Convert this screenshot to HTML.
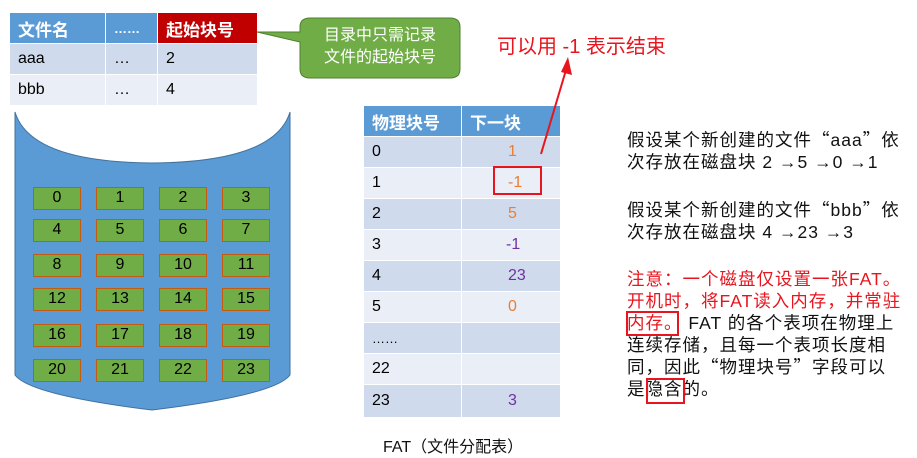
<!DOCTYPE html><html><head><meta charset="utf-8"><style>
body{margin:0;width:917px;height:458px;background:#fff;position:relative;overflow:hidden;font-family:"Liberation Sans","Noto Sans CJK SC",sans-serif}
.a{position:absolute}
.c{position:absolute;display:flex;align-items:center;box-sizing:border-box;padding-left:8px;font-size:16px;color:#000}
.h{background:#5b9bd5;color:#fff;font-weight:bold;font-size:17px}
.r1{background:#cfdbed}.r2{background:#e9eef7}
.blk{position:absolute;width:48px;height:23px;background:#70ad47;border:1.5px solid #c55a11;box-sizing:border-box;text-align:center;line-height:20px;font-size:16px;color:#000}
.t{position:absolute;left:627px;font-size:17.5px;letter-spacing:1px;line-height:22px;color:#111;white-space:nowrap;font-family:"Liberation Sans","Noto Sans CJK SC",sans-serif}
.q{font-family:"Noto Sans CJK SC",sans-serif}
</style></head><body>
<div class="c h" style="left:10px;top:13px;width:95px;height:30px">文件名</div>
<div class="c h" style="left:106px;top:13px;width:51px;height:30px;font-size:13px">……</div>
<div class="c h" style="left:158px;top:13px;width:99px;height:30px;background:#c00000">起始块号</div>
<div class="c r1" style="left:10px;top:44px;width:95px;height:30px">aaa</div>
<div class="c r1" style="left:106px;top:44px;width:51px;height:30px">…</div>
<div class="c r1" style="left:158px;top:44px;width:99px;height:30px">2</div>
<div class="c r2" style="left:10px;top:75px;width:95px;height:30px">bbb</div>
<div class="c r2" style="left:106px;top:75px;width:51px;height:30px">…</div>
<div class="c r2" style="left:158px;top:75px;width:99px;height:30px">4</div>
<svg class="a" style="left:0;top:0" width="917" height="458">
<path d="M300 27 Q300 18 310 18 L450 18 Q460 18 460 27 L460 69 Q460 78 450 78 L310 78 Q300 78 300 69 L300 42 L257 32 L300 32 Z" fill="#70ad47" stroke="#507e32" stroke-width="1"/>
<path d="M15 112 L15 375 Q30 395 152 410 Q275 395 290 375 L290 112 Q275 162 152 163 Q30 162 15 112 Z" fill="#5b9bd5" stroke="#41719c" stroke-width="1"/>
</svg>
<div class="a" style="left:300px;top:25px;width:160px;text-align:center;color:#fff;font-size:16px;line-height:22px">目录中只需记录<br>文件的起始块号</div>
<div class="a" style="left:497px;top:30px;color:#e8141e;font-size:20px">可以用 -1 表示结束</div>
<div class="blk" style="left:33px;top:187px">0</div><div class="blk" style="left:96px;top:187px">1</div><div class="blk" style="left:159px;top:187px">2</div><div class="blk" style="left:222px;top:187px">3</div>
<div class="blk" style="left:33px;top:219px">4</div><div class="blk" style="left:96px;top:219px">5</div><div class="blk" style="left:159px;top:219px">6</div><div class="blk" style="left:222px;top:219px">7</div>
<div class="blk" style="left:33px;top:254px">8</div><div class="blk" style="left:96px;top:254px">9</div><div class="blk" style="left:159px;top:254px">10</div><div class="blk" style="left:222px;top:254px">11</div>
<div class="blk" style="left:33px;top:288px">12</div><div class="blk" style="left:96px;top:288px">13</div><div class="blk" style="left:159px;top:288px">14</div><div class="blk" style="left:222px;top:288px">15</div>
<div class="blk" style="left:33px;top:324px">16</div><div class="blk" style="left:96px;top:324px">17</div><div class="blk" style="left:159px;top:324px">18</div><div class="blk" style="left:222px;top:324px">19</div>
<div class="blk" style="left:33px;top:359px">20</div><div class="blk" style="left:96px;top:359px">21</div><div class="blk" style="left:159px;top:359px">22</div><div class="blk" style="left:222px;top:359px">23</div>
<div class="c h" style="left:364px;top:106px;width:97px;height:30px">物理块号</div>
<div class="c h" style="left:462px;top:106px;width:98px;height:30px">下一块</div>
<div class="c r1" style="left:364px;top:137px;width:97px;height:30px">0</div><div class="c r1" style="left:462px;top:137px;width:98px;height:30px;padding-left:46px;color:#ed7d31">1</div>
<div class="c r2" style="left:364px;top:168px;width:97px;height:30px">1</div><div class="c r2" style="left:462px;top:168px;width:98px;height:30px;padding-left:46px;color:#ed7d31">-1</div>
<div class="c r1" style="left:364px;top:199px;width:97px;height:30px">2</div><div class="c r1" style="left:462px;top:199px;width:98px;height:30px;padding-left:46px;color:#ed7d31">5</div>
<div class="c r2" style="left:364px;top:230px;width:97px;height:30px">3</div><div class="c r2" style="left:462px;top:230px;width:98px;height:30px;padding-left:44px;color:#7030a0">-1</div>
<div class="c r1" style="left:364px;top:261px;width:97px;height:30px">4</div><div class="c r1" style="left:462px;top:261px;width:98px;height:30px;padding-left:46px;color:#7030a0">23</div>
<div class="c r2" style="left:364px;top:292px;width:97px;height:30px">5</div><div class="c r2" style="left:462px;top:292px;width:98px;height:30px;padding-left:46px;color:#ed7d31">0</div>
<div class="c r1" style="left:364px;top:323px;width:97px;height:30px;font-size:13px">……</div><div class="c r1" style="left:462px;top:323px;width:98px;height:30px"></div>
<div class="c r2" style="left:364px;top:354px;width:97px;height:30px">22</div><div class="c r2" style="left:462px;top:354px;width:98px;height:30px"></div>
<div class="c r1" style="left:364px;top:385px;width:97px;height:32px">23</div><div class="c r1" style="left:462px;top:385px;width:98px;height:32px;padding-left:46px;color:#7030a0">3</div>
<div class="a" style="left:383px;top:433px;font-size:16px;color:#111">FAT（文件分配表）</div>
<div class="t" style="top:129px">假设某个新创建的文件<span class="q">“</span>aaa<span class="q">”</span>依<br>次存放在磁盘块 2 <b>→</b>5 <b>→</b>0 <b>→</b>1</div>
<div class="t" style="top:199px">假设某个新创建的文件<span class="q">“</span>bbb<span class="q">”</span>依<br>次存放在磁盘块 4 <b>→</b>23 <b>→</b>3</div>
<div class="t" style="top:268px"><span style="color:#e8141e">注意：一个磁盘仅设置一张FAT。<br>开机时，将FAT读入内存，并常驻<br>内存。</span> FAT 的各个表项在物理上<br>连续存储，且每一个表项长度相<br>同，因此<span class="q">“</span>物理块号<span class="q">”</span>字段可以<br>是隐含的。</div>
<svg class="a" style="left:0;top:0;z-index:5" width="917" height="458">
<line x1="541" y1="154" x2="566" y2="70" stroke="#e8141e" stroke-width="2"/>
<path d="M568 57 L572 75 L561 72 Z" fill="#e8141e"/>
<rect x="494" y="167" width="47" height="27" fill="none" stroke="#e8141e" stroke-width="2"/>
<rect x="627" y="312" width="51" height="23" fill="none" stroke="#e8141e" stroke-width="2"/>
<rect x="647" y="379" width="37" height="24" fill="none" stroke="#e8141e" stroke-width="2"/>
</svg>
</body></html>
